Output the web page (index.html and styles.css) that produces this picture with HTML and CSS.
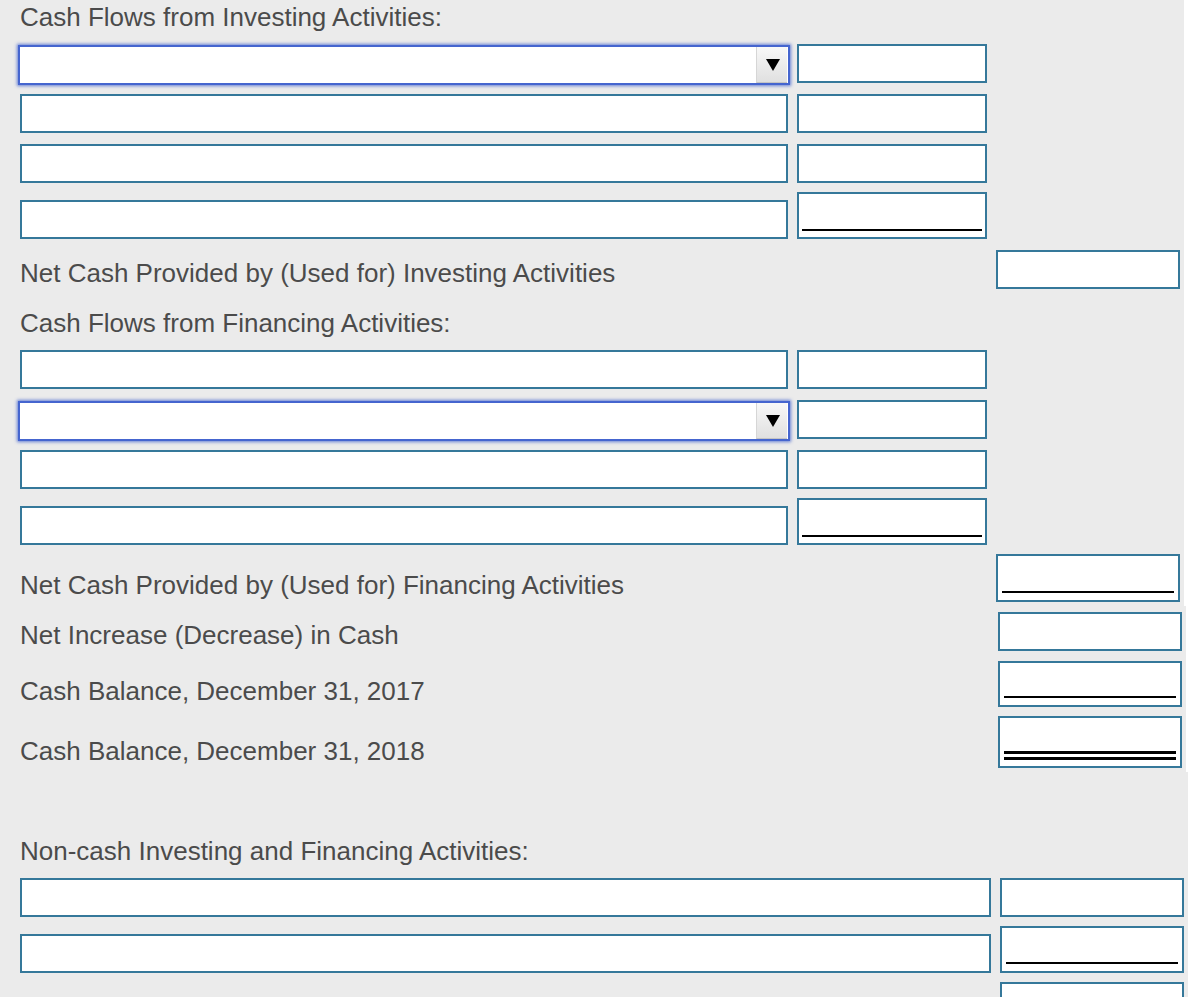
FILE: index.html
```html
<!DOCTYPE html>
<html lang="en">
<head>
<meta charset="utf-8">
<title>Statement of Cash Flows</title>
<link rel="stylesheet" href="styles.css">
</head>
<body>
<div class="sheet">
  <section class="part part-a">
    <p class="heading mt-2">Cash Flows from Investing Activities:</p>
    <div class="row row-top mt-12">
      <div class="select"><span class="select-btn"><svg width="14" height="12" viewBox="0 0 14 12"><polygon points="0,0 14,0 7,12" fill="#000"/></svg></span></div>
      <input class="field amt" type="text">
    </div>
    <div class="row mt-9">
      <input class="field desc" type="text">
      <input class="field amt" type="text">
    </div>
    <div class="row mt-11">
      <input class="field desc" type="text">
      <input class="field amt" type="text">
    </div>
    <div class="row mt-9">
      <input class="field desc" type="text">
      <input class="field amt tall under" type="text">
    </div>
    <div class="total-row mt-11">
      <p class="label off-8">Net Cash Provided by (Used for) Investing Activities</p>
      <input class="field total" type="text">
    </div>

    <p class="heading mt-19">Cash Flows from Financing Activities:</p>
    <div class="row mt-12">
      <input class="field desc" type="text">
      <input class="field amt" type="text">
    </div>
    <div class="row row-top mt-11">
      <div class="select"><span class="select-btn"><svg width="14" height="12" viewBox="0 0 14 12"><polygon points="0,0 14,0 7,12" fill="#000"/></svg></span></div>
      <input class="field amt" type="text">
    </div>
    <div class="row mt-9">
      <input class="field desc" type="text">
      <input class="field amt" type="text">
    </div>
    <div class="row mt-9">
      <input class="field desc" type="text">
      <input class="field amt tall under" type="text">
    </div>
    <div class="total-row mt-9">
      <p class="label off-16">Net Cash Provided by (Used for) Financing Activities</p>
      <input class="field total h-48 under-wide" type="text">
    </div>
  </section>

  <section class="part part-b">
    <div class="total-row mt-6">
      <p class="label off-8">Net Increase (Decrease) in Cash</p>
      <input class="field total" type="text">
    </div>
    <div class="total-row mt-10">
      <p class="label off-15">Cash Balance, December 31, 2017</p>
      <input class="field total h-46 under-wide" type="text">
    </div>
    <div class="total-row mt-9">
      <p class="label off-20">Cash Balance, December 31, 2018</p>
      <input class="field total h-52 double" type="text">
    </div>
  </section>

  <section class="part part-c">
    <p class="heading mt-64">Non-cash Investing and Financing Activities:</p>
    <div class="row mt-12">
      <input class="field desc" type="text">
      <input class="field amt" type="text">
    </div>
    <div class="row mt-9">
      <input class="field desc" type="text">
      <input class="field amt tall under-wide" type="text">
    </div>
    <div class="row mt-9">
      <input class="field amt push" type="text">
    </div>
  </section>
</div>
</body>
</html>
```

FILE: styles.css
```css
html, body {
  margin: 0;
  padding: 0;
  background: #ffffff;
  font-family: "Liberation Sans", Arial, Helvetica, sans-serif;
}

.sheet {
  display: flex;
  flex-direction: column;
}

.part {
  display: flex;
  flex-direction: column;
  background: #ebebeb;
  overflow: hidden;
  box-sizing: border-box;
  flex: none;
}

.part-a { width: 1184px; height: 606px; }
.part-b { width: 1186px; height: 166px; }
.part-c { width: 1188px; height: 225px; }

.heading,
.label {
  margin: 0;
  font-size: 26px;
  line-height: 30px;
  color: #4b4b4b;
  white-space: nowrap;
}

.heading { padding-left: 20px; }

.row {
  display: flex;
  align-items: flex-end;
  gap: 9px;
  padding-left: 20px;
  flex: none;
}

.row-top { align-items: flex-start; }

.total-row {
  display: flex;
  justify-content: space-between;
  align-items: flex-start;
  padding-left: 20px;
  padding-right: 4px;
  flex: none;
}

.field {
  display: block;
  box-sizing: border-box;
  height: 39px;
  margin: 0;
  padding: 0;
  border: 2px solid #35789a;
  border-radius: 0;
  background-color: #ffffff;
  outline: none;
  font: inherit;
  flex: none;
}

.desc { width: 768px; }
.amt { width: 190px; }
.part-c .desc { width: 971px; }
.part-c .amt { width: 184px; }
.total { width: 184px; }

.tall { height: 47px; }
.h-46 { height: 46px; }
.h-48 { height: 48px; }
.h-52 { height: 52px; }

.push {
  margin-left: auto;
  margin-right: 4px;
}

.under {
  background-image: linear-gradient(#000, #000);
  background-repeat: no-repeat;
  background-size: calc(100% - 6px) 2px;
  background-position: left 3px bottom 6px;
}

.under-wide {
  background-image: linear-gradient(#000, #000);
  background-repeat: no-repeat;
  background-size: calc(100% - 8px) 2px;
  background-position: left 4px bottom 7px;
}

.double {
  background-image: linear-gradient(#000, #000), linear-gradient(#000, #000);
  background-repeat: no-repeat;
  background-size: calc(100% - 8px) 3px, calc(100% - 8px) 3px;
  background-position: left 4px bottom 12px, left 4px bottom 6px;
}

/* focused drop-down */
.select {
  box-sizing: border-box;
  width: 772px;
  height: 40px;
  margin: 1px -2px 0 -2px;
  border: 2px solid #4565cf;
  background: #ffffff;
  box-shadow: 0 0 3px 1px rgba(69, 101, 207, 0.8);
  display: flex;
  justify-content: flex-end;
  padding-right: 1px;
  flex: none;
}

.select-btn {
  width: 31px;
  height: 100%;
  box-sizing: border-box;
  border-left: 1px solid #d6d6d6;
  border-bottom: 1px solid #c4c4c4;
  background: linear-gradient(#f8f8f8, #e0e0e0);
  display: flex;
  align-items: center;
  justify-content: center;
  padding-left: 1px;
}

.mt-2 { margin-top: 2px; }
.mt-6 { margin-top: 6px; }
.mt-9 { margin-top: 9px; }
.mt-10 { margin-top: 10px; }
.mt-11 { margin-top: 11px; }
.mt-12 { margin-top: 12px; }
.mt-19 { margin-top: 19px; }
.mt-64 { margin-top: 64px; }

.off-8 { margin-top: 8px; }
.off-15 { margin-top: 15px; }
.off-16 { margin-top: 16px; }
.off-20 { margin-top: 20px; }
```
